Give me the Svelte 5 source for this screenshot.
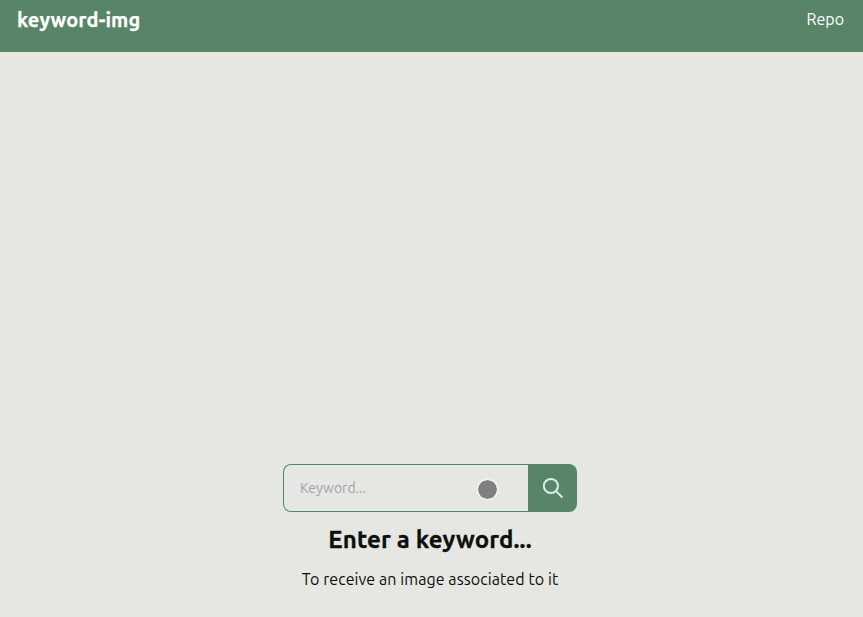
<script>
  let keyword = $state('');
</script>

<div class="page">
  <header>
    <span class="brand">keyword-img</span>
    <a href="#repo">Repo</a>
  </header>
  <main>
    <form onsubmit={(e) => e.preventDefault()}>
      <input type="text" placeholder="Keyword..." bind:value={keyword} />
      <button aria-label="Search">
        <svg width="23" height="22" viewBox="0 0 23 22" fill="none" stroke="#d3f0ea" stroke-width="2">
          <circle cx="9.9" cy="9" r="7.1" />
          <path d="M15 14.1L21.4 20.5" />
        </svg>
      </button>
      <span class="pointer"></span>
    </form>
    <h1>Enter a keyword...</h1>
    <p>To receive an image associated to it</p>
  </main>
</div>

<style>
  :global(body) {
    margin: 0;
    background: #e6e7e2;
  }
  .page {
    box-sizing: border-box;
    display: flex;
    flex-direction: column;
    height: 617px;
    overflow: hidden;
    background: #e6e7e2;
    color: #0b110d;
    font-family: Ubuntu, "Noto Sans", sans-serif;
  }
  header {
    box-sizing: border-box;
    display: flex;
    justify-content: space-between;
    height: 52px;
    flex: none;
    padding: 6px 19px 0 17px;
    background: #588568;
    color: #fff;
    line-height: 28px;
  }
  .brand {
    font-size: 20px;
    font-weight: 700;
    letter-spacing: 0.15px;
    -webkit-text-stroke: 0.25px currentColor;
  }
  a {
    color: inherit;
    font-size: 16px;
    line-height: 26px;
    text-decoration: none;
  }
  main {
    display: flex;
    flex: 1;
    flex-direction: column;
    align-items: center;
    justify-content: flex-end;
    padding: 0 3px 26px 0;
  }
  form {
    position: relative;
    display: flex;
    width: 294px;
    height: 48px;
  }
  input {
    box-sizing: border-box;
    width: 245px;
    height: 48px;
    padding: 0 16px;
    border: 1px solid #588568;
    border-right: 0;
    border-radius: 8px 0 0 8px;
    outline: 0;
    background: transparent;
    font: 14px Ubuntu, "Noto Sans", sans-serif;
  }
  input::placeholder {
    color: #9ba3ab;
    opacity: 1;
  }
  button {
    display: flex;
    align-items: center;
    justify-content: center;
    width: 49px;
    padding: 0;
    border: 0;
    border-radius: 0 8px 8px 0;
    background: #588568;
  }
  .pointer {
    position: absolute;
    top: 15px;
    left: 194px;
    box-sizing: border-box;
    width: 21px;
    height: 21px;
    border: 1px solid #f3f4f1;
    border-radius: 50%;
    background: #80817e;
    background-clip: padding-box;
    box-shadow: 0 0 1px 0.5px #f1f2ef;
  }
  h1 {
    margin: 12px 0 0;
    font-size: 24px;
    font-weight: 700;
    line-height: 32px;
    letter-spacing: 0.14px;
    -webkit-text-stroke: 0.3px currentColor;
    white-space: nowrap;
  }
  p {
    margin: 11px 0 0;
    font-size: 16px;
    line-height: 24px;
    letter-spacing: 0.08px;
    white-space: nowrap;
  }
</style>
